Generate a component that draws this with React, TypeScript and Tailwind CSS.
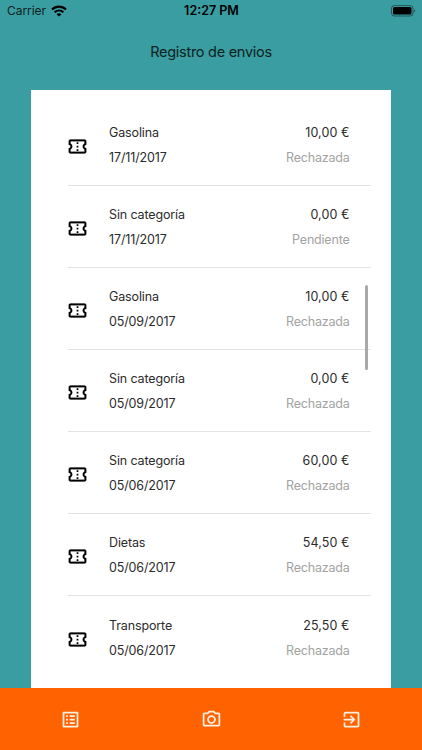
import { MdExitToApp, MdOutlineListAlt, MdOutlinePhotoCamera } from "react-icons/md";

type Expense = {
    category: string;
    date: string;
    amount: string;
    status: string;
};

const expenses: Expense[] = [
    { category: "Gasolina", date: "17/11/2017", amount: "10,00 €", status: "Rechazada" },
    { category: "Sin categoría", date: "17/11/2017", amount: "0,00 €", status: "Pendiente" },
    { category: "Gasolina", date: "05/09/2017", amount: "10,00 €", status: "Rechazada" },
    { category: "Sin categoría", date: "05/09/2017", amount: "0,00 €", status: "Rechazada" },
    { category: "Sin categoría", date: "05/06/2017", amount: "60,00 €", status: "Rechazada" },
    { category: "Dietas", date: "05/06/2017", amount: "54,50 €", status: "Rechazada" },
    { category: "Transporte", date: "05/06/2017", amount: "25,50 €", status: "Rechazada" },
];

function StatusBar() {
    return (
        <div className="h-[22px] grid grid-cols-3 items-center pl-[7px] pr-[6px] text-black">
            <div className="flex items-center gap-[5px]">
                <span className="text-[12px] tracking-[-0.05px] text-[#0c1f20]">Carrier</span>
                <svg width="16" height="12" viewBox="0 0 16 12" fill="none" stroke="currentColor" strokeWidth="2.1">
                    <path d="M1 4.6C5 .6 11 .6 15 4.6" />
                    <path d="M3.6 7.3c2.6-2.5 6.2-2.5 8.8 0" />
                    <path d="M8 11.6 5.6 9.2c1.4-1.2 3.4-1.2 4.8 0z" fill="currentColor" stroke="none" />
                </svg>
            </div>
            <span className="text-center text-[12.5px] font-semibold whitespace-nowrap">12:27 PM</span>
            <svg className="justify-self-end" width="25" height="12" viewBox="0 0 25 12">
                <rect x="0.5" y="0.6" width="21.5" height="10.4" rx="2.8" fill="none" stroke="#000" strokeOpacity="0.45" />
                <rect x="2" y="2.1" width="18.5" height="7.4" rx="1.5" fill="#000" />
                <path d="M23.3 4.2c1.3.6 1.3 2.6 0 3.2z" fill="#000" fillOpacity="0.5" />
            </svg>
        </div>
    );
}

function TicketIcon() {
    return (
        <svg className="w-[21px] h-[21px] -ml-[1px] mt-[4px]" viewBox="0 0 24 24" fill="#000" stroke="#000" strokeWidth="0.3">
            <path d="M22 10V6c0-1.11-.9-2-2-2H4c-1.1 0-1.99.89-1.99 2v4c1.1 0 1.99.9 1.99 2s-.89 2-2 2v4c0 1.1.9 2 2 2h16c1.1 0 2-.9 2-2v-4c-1.1 0-2-.9-2-2s.9-2 2-2zm-2-1.46c-1.19.69-2 1.99-2 3.46s.81 2.77 2 3.46V18H4v-2.54c1.19-.69 2-1.99 2-3.46 0-1.48-.8-2.77-1.99-3.46L4 6h16v2.54z" />
            <path d="M11 15h2v2h-2zM11 11h2v2h-2zM11 7h2v2h-2z" stroke="none" />
        </svg>
    );
}

function ExpenseRow({ expense }: { expense: Expense }) {
    return (
        <li className="h-[82.15px] shrink-0 flex items-center border-b border-[#e3e3e3] last:border-b-0 pr-[21.5px] text-[12.5px] leading-[25px] tracking-[-0.13px] text-[#2b2b2b]">
            <TicketIcon />
            <div className="ml-[21px] flex-1 mt-[1px]">
                <p>{expense.category}</p>
                <p>{expense.date}</p>
            </div>
            <div className="text-right mt-[1px]">
                <p className="tracking-[0.1px]">{expense.amount}</p>
                <p className="tracking-[-0.2px] text-[#a3a3a3]">{expense.status}</p>
            </div>
        </li>
    );
}

export default function App() {
    return (
        <div className="w-full h-screen flex flex-col overflow-hidden bg-[#3a9da1] font-['Inter','Liberation_Sans',sans-serif]">
            <StatusBar />
            <h1 className="h-[68px] pt-[20px] text-center text-[14.5px] leading-[20px] tracking-[-0.28px] text-[#0c1f20]">Registro de envios</h1>

            <main className="relative flex-1 min-h-0 mx-[31px] pt-[13.5px] pl-[37px] pr-[20px] bg-white overflow-hidden">
                <ul className="flex flex-col">
                    {expenses.map((expense, i) => (
                        <ExpenseRow key={i} expense={expense} />
                    ))}
                </ul>
                {/* Scroll indicator */}
                <div className="absolute right-[23px] top-[195px] w-[3px] h-[85px] rounded-full bg-[#a9a9a9]" />
            </main>

            <nav className="h-[62px] shrink-0 grid grid-cols-3 place-items-center bg-[#ff6200] text-[#fff1e2]">
                <MdOutlineListAlt className="w-[21px] h-[21px]" />
                <MdOutlinePhotoCamera className="w-[21px] h-[21px] ml-[1px]" />
                <MdExitToApp className="w-[21px] h-[21px]" />
            </nav>
        </div>
    );
}
